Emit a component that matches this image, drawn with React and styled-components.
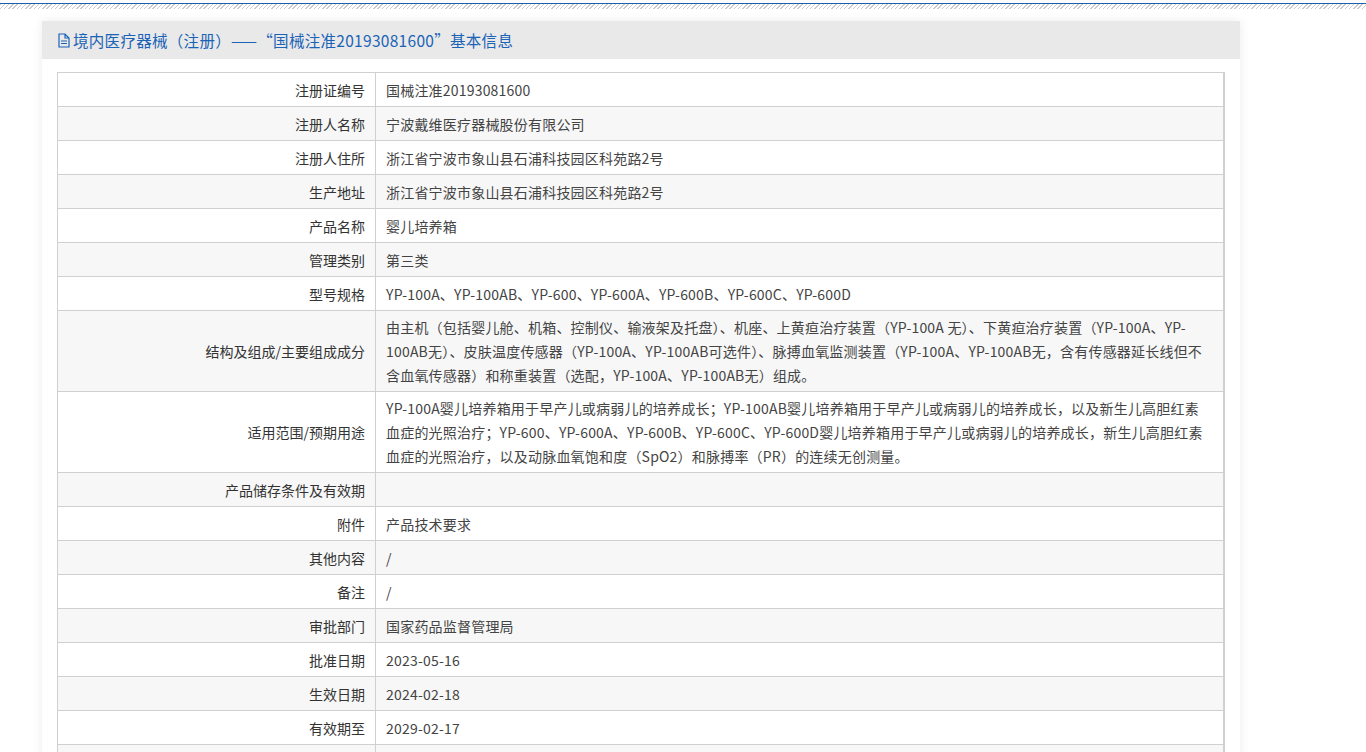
import React from "react";
import styled, { createGlobalStyle } from "styled-components";

const G = createGlobalStyle`
  body{margin:0;background:#fff;font-family:"Noto Sans CJK SC","Noto Sans",sans-serif;}
`;
const TopLine = styled.div`
  height:3px;border-bottom:1px solid #1a5fae;
`;
const Hatch = styled.div`
  height:5px;
  background:repeating-linear-gradient(135deg,#ccc 0 1px,#fff 1px 3px);
`;
const Panel = styled.div`
  width:1198px;margin:12px 0 0 42px;background:#fff;
  box-shadow:0 0 10px rgba(0,0,0,0.08);padding-bottom:20px;
`;
const Header = styled.div`
  height:38px;background:#e9e9e9;display:flex;align-items:center;
  padding-left:15px;color:#1b63b6;font-size:15.5px;gap:2px;letter-spacing:0.3px;
`;
const Table = styled.div`
  margin:13px 15px 0 15px;border:1px solid #d0d0d0;border-right-width:2px;
`;
const Row = styled.div`
  display:grid;grid-template-columns:318px 1fr;
  background:${p=>p.$alt?"#f7f7f7":"#fff"};
  border-top:${p=>p.$first?"none":"1px solid #d0d0d0"};
  min-height:33px;font-size:14px;
`;
const Label = styled.div`
  display:flex;align-items:center;justify-content:flex-end;padding-right:10px;
  border-right:1px solid #d0d0d0;color:#333;
`;
const Value = styled.div`
  padding:4px 10px;line-height:24px;color:#444;display:flex;align-items:center;
  letter-spacing:0.2px;
`;

const rows = [
["注册证编号","国械注准20193081600"],
["注册人名称","宁波戴维医疗器械股份有限公司"],
["注册人住所","浙江省宁波市象山县石浦科技园区科苑路2号"],
["生产地址","浙江省宁波市象山县石浦科技园区科苑路2号"],
["产品名称","婴儿培养箱"],
["管理类别","第三类"],
["型号规格","YP-100A、YP-100AB、YP-600、YP-600A、YP-600B、YP-600C、YP-600D"],
["结构及组成/主要组成成分","由主机（包括婴儿舱、机箱、控制仪、输液架及托盘）、机座、上黄疸治疗装置（YP-100A 无）、下黄疸治疗装置（YP-100A、YP-100AB无）、皮肤温度传感器（YP-100A、YP-100AB可选件）、脉搏血氧监测装置（YP-100A、YP-100AB无，含有传感器延长线但不含血氧传感器）和称重装置（选配，YP-100A、YP-100AB无）组成。"],
["适用范围/预期用途","YP-100A婴儿培养箱用于早产儿或病弱儿的培养成长；YP-100AB婴儿培养箱用于早产儿或病弱儿的培养成长，以及新生儿高胆红素血症的光照治疗；YP-600、YP-600A、YP-600B、YP-600C、YP-600D婴儿培养箱用于早产儿或病弱儿的培养成长，新生儿高胆红素血症的光照治疗，以及动脉血氧饱和度（SpO2）和脉搏率（PR）的连续无创测量。"],
["产品储存条件及有效期",""],
["附件","产品技术要求"],
["其他内容","/"],
["备注","/"],
["审批部门","国家药品监督管理局"],
["批准日期","2023-05-16"],
["生效日期","2024-02-18"],
["有效期至","2029-02-17"],
["",""],
];

const Icon = () => (
  <svg width="14" height="15" viewBox="0 0 14 15" fill="none" stroke="#1b63b6" strokeWidth="1.2">
    <path d="M2 1h6l4 4v9H2z M8 1v4h4 M4 8h6 M4 10.5h6"/>
  </svg>
);

export default function App(){
  return <>
    <G/>
    <TopLine/><Hatch/>
    <Panel>
      <Header><Icon/>境内医疗器械（注册）——“国械注准20193081600”基本信息</Header>
      <Table>
        {rows.map((r,i)=>(
          <Row key={i} $alt={i%2===1} $first={i===0}>
            <Label>{r[0]}</Label><Value>{r[1]}</Value>
          </Row>
        ))}
      </Table>
    </Panel>
  </>;
}
